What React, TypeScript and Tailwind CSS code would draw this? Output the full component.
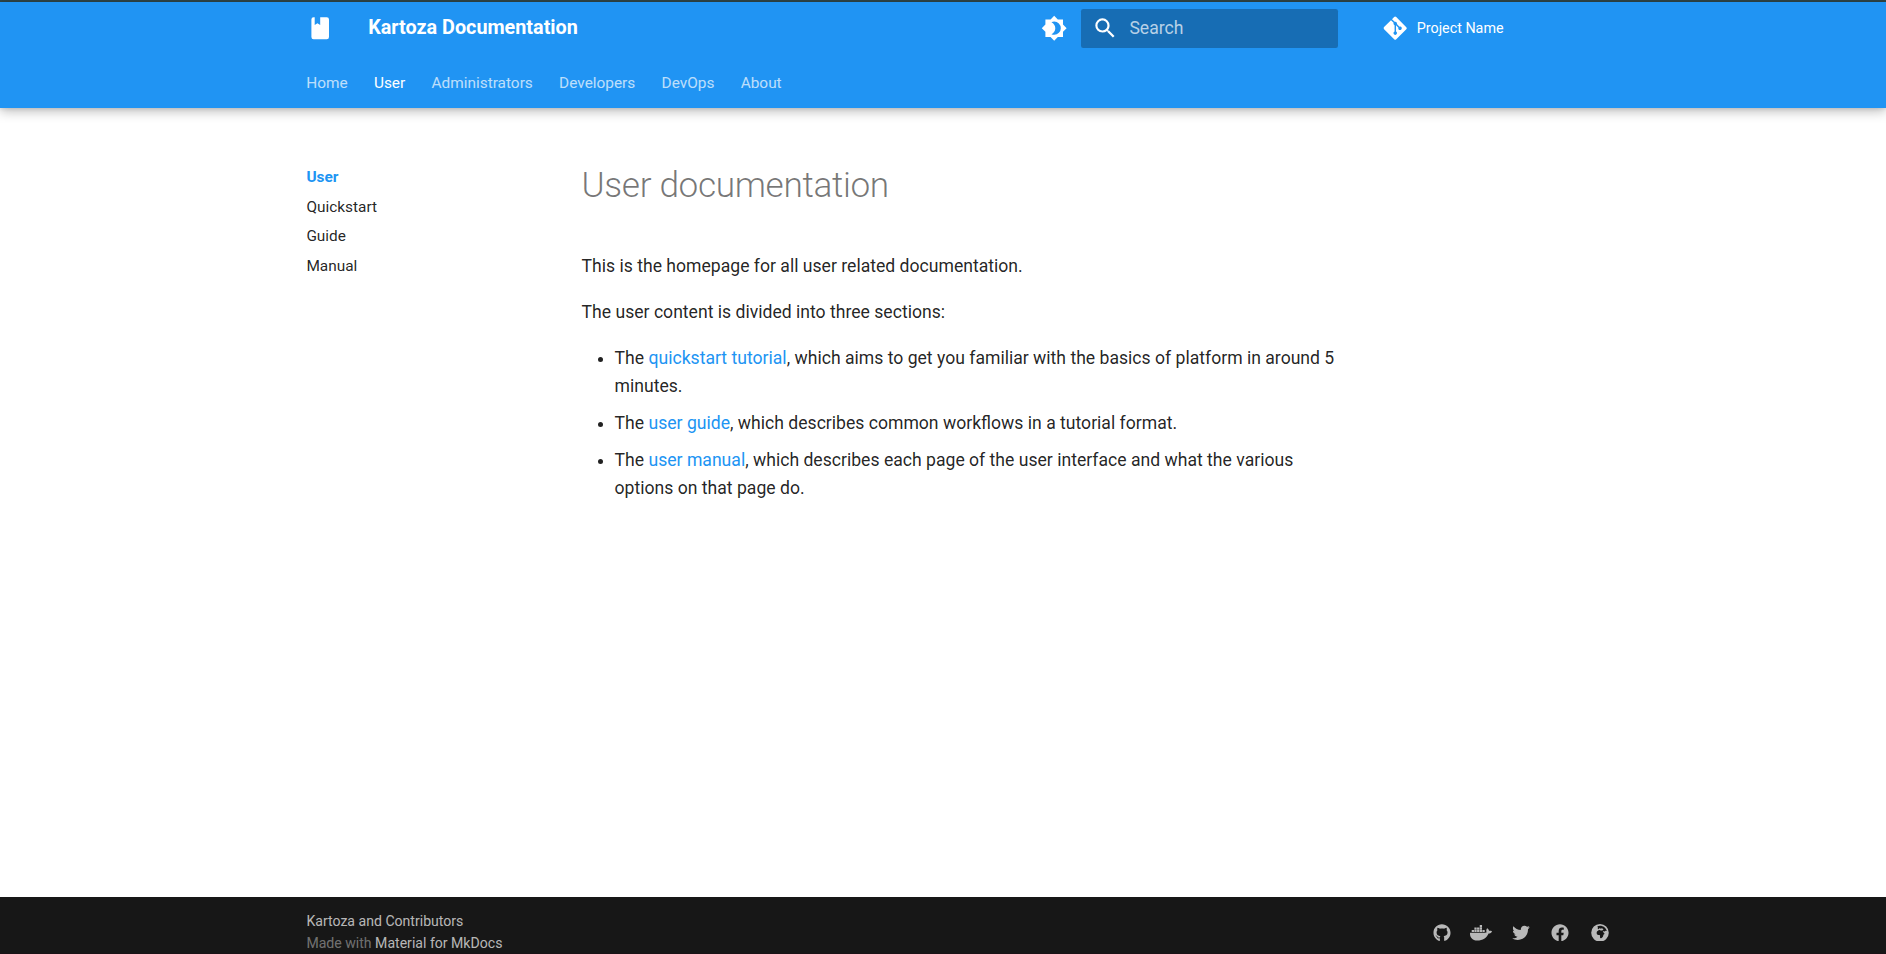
import React from "react";
import { FaGitAlt, FaGithub, FaDocker, FaTwitter, FaFacebook } from "react-icons/fa";
import { FaEarthAfrica } from "react-icons/fa6";

const BOOK =
  "M18 22a2 2 0 0 0 2-2V4a2 2 0 0 0-2-2h-6v7L9.5 7.5 7 9V2H6a2 2 0 0 0-2 2v16a2 2 0 0 0 2 2h12z";
const BRIGHTNESS =
  "M12 18c-.89 0-1.74-.2-2.5-.55C11.56 16.5 13 14.42 13 12s-1.44-4.5-3.5-5.45C10.26 6.2 11.11 6 12 6a6 6 0 0 1 6 6 6 6 0 0 1-6 6m8-9.31V4h-4.69L12 .69 8.69 4H4v4.69L.69 12 4 15.31V20h4.69L12 23.31 15.31 20H20v-4.69L23.31 12 20 8.69z";
const MAGNIFY =
  "M9.5 3A6.5 6.5 0 0 1 16 9.5c0 1.61-.59 3.09-1.56 4.23l.27.27h.79l5 5-1.5 1.5-5-5v-.79l-.27-.27A6.516 6.516 0 0 1 9.5 16 6.5 6.5 0 0 1 3 9.5 6.5 6.5 0 0 1 9.5 3m0 2C7 5 5 7 5 9.5S7 14 9.5 14 14 12 14 9.5 12 5 9.5 5z";

function MdIcon({ path }: { path: string }) {
  return (
    <svg viewBox="0 0 24 24" className="block size-[26.4px] shrink-0 fill-current">
      <path d={path} />
    </svg>
  );
}

const tabs = ["Home", "User", "Administrators", "Developers", "DevOps", "About"];
const pages = ["Quickstart", "Guide", "Manual"];
const sections = [
  { link: "quickstart tutorial", rest: ", which aims to get you familiar with the basics of platform in around 5 minutes." },
  { link: "user guide", rest: ", which describes common workflows in a tutorial format." },
  { link: "user manual", rest: ", which describes each page of the user interface and what the various options on that page do." },
];
const social = [FaGithub, FaDocker, FaTwitter, FaFacebook, FaEarthAfrica];

function Header() {
  return (
    <header className="z-10 shrink-0 bg-[#2094f3] text-white shadow-[0_0_4.4px_rgba(0,0,0,0.14),0_4.4px_11px_rgba(0,0,0,0.26)]">
      <div className="ml-[289px] flex h-[52.8px] w-[1342px] items-center px-[4.4px]">
        <div className="m-[4.4px] p-[8.8px]">
          <MdIcon path={BOOK} />
        </div>
        <h1 className="ml-[22px] grow text-[19.8px] leading-[52.8px] font-bold">Kartoza Documentation</h1>
        <div className="m-[4.4px] p-[8.8px]">
          <MdIcon path={BRIGHTNESS} />
        </div>
        <div className="flex h-[39.6px] w-[257.4px] items-center rounded-[2.2px] bg-black/26 pl-[11px]">
          <MdIcon path={MAGNIFY} />
          <span className="ml-[11px] text-[17.6px] text-white/70">Search</span>
        </div>
        <div className="mr-[8.8px] ml-[22px] flex h-[52.8px] w-[257.4px] items-center pl-[22px]">
          <FaGitAlt className="h-[26.4px] w-[26.4px]" />
          <span className="ml-[8px] text-[14.3px]">Project Name</span>
        </div>
      </div>
      <nav className="ml-[306.2px] flex h-[52.8px] gap-[26.3px] pt-[15.6px] text-[15.4px] leading-[26px]">
        {tabs.map((t) => (
          <a key={t} className={t === "User" ? "" : "opacity-70"}>
            {t}
          </a>
        ))}
      </nav>
    </header>
  );
}

export default function App() {
  return (
    <div className="flex h-[954px] w-[1886px] flex-col overflow-hidden bg-white font-['Roboto',sans-serif] text-black/87 antialiased">
      <div className="h-[2px] shrink-0 bg-[#2f4648]" />
      <Header />
      <main className="ml-[289px] flex w-[1342px] grow pt-[33px]">
        <nav className="w-[266.2px] shrink-0 pt-[26.4px] pl-[17.4px] text-[15.4px] leading-[20px]">
          <div className="font-bold text-[#2094f3]">User</div>
          <ul>
            {pages.map((p) => (
              <li key={p} className="mt-[9.6px]">
                {p}
              </li>
            ))}
          </ul>
        </nav>
        <article className="ml-[26.4px] w-[756.8px] pt-[22px] text-[17.6px] leading-[28.16px]">
          <h1 className="mb-[44px] text-[35.2px] leading-[45.76px] font-light tracking-[-0.01em] text-black/54">
            User documentation
          </h1>
          <p className="my-[17.6px]">This is the homepage for all user related documentation.</p>
          <p className="my-[17.6px]">The user content is divided into three sections:</p>
          <ul className="list-disc">
            {sections.map((s) => (
              <li key={s.link} className="mb-[8.8px] ml-[33px]">
                The <a className="text-[#2094f3]">{s.link}</a>
                {s.rest}
              </li>
            ))}
          </ul>
        </article>
      </main>
      <footer className="h-[57px] shrink-0 border-b border-[#1a1216] bg-[#171717]">
        <div className="ml-[289px] flex w-[1342px] justify-between pr-[13.6px] pl-[17.4px]">
          <div className="pt-[13px] text-[14.08px] leading-[22px] text-white/40">
            <div className="text-white/70">Kartoza and Contributors</div>
            <div>
              Made with <a className="text-white/70">Material for MkDocs</a>
            </div>
          </div>
          <div className="flex gap-[4.4px] pt-[18px] text-white/70">
            {social.map((Icon, i) => (
              <a key={i} className="flex size-[35.2px] items-center justify-center">
                <Icon className="h-[17.6px] w-[22px]" />
              </a>
            ))}
          </div>
        </div>
      </footer>
    </div>
  );
}
